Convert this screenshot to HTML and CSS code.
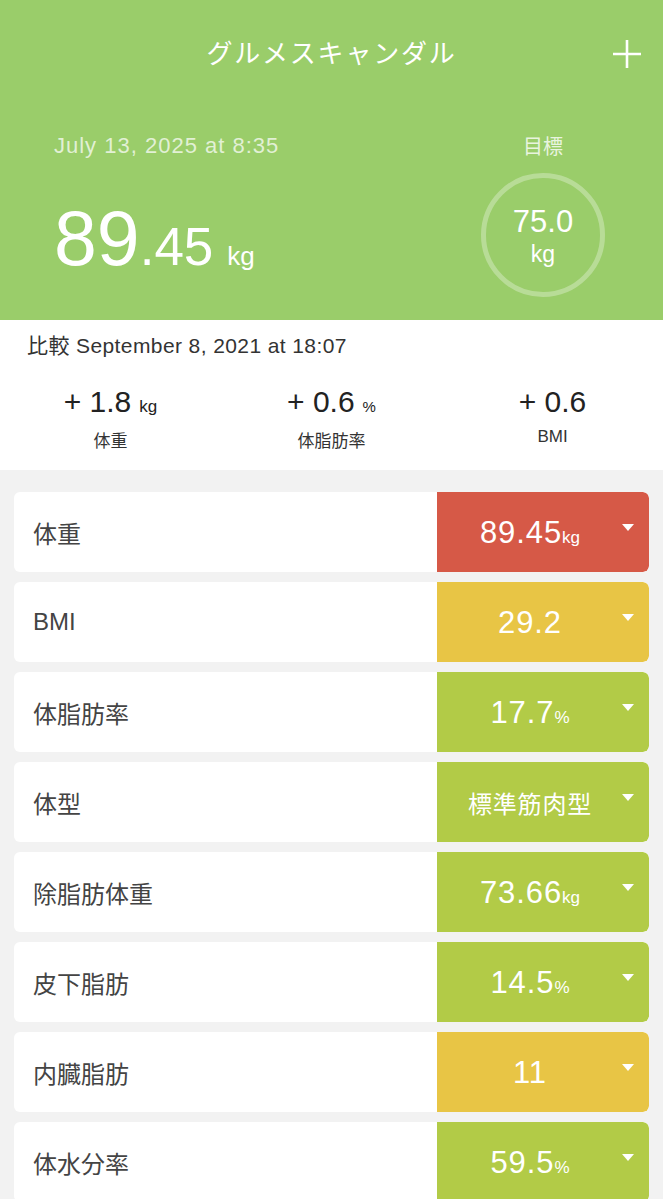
FILE: index.html
```html
<!DOCTYPE html>
<html lang="ja">
<head>
<meta charset="utf-8">
<link rel="stylesheet" href="styles.css">
</head>
<body>
<header class="hero">
  <div class="topbar">
    <span></span>
    <h1 class="title">グルメスキャンダル</h1>
    <svg class="plus" width="30" height="30" viewBox="0 0 30 30"><path d="M15 1V29M1 15H29" stroke="#fff" stroke-width="2.6" fill="none"/></svg>
  </div>
  <div class="summary">
    <div class="current">
      <div class="date">July 13, 2025 at 8:35</div>
      <div class="weight"><span class="w-int">89</span><span class="w-dec">.45</span><span class="w-unit">kg</span></div>
    </div>
    <div class="goal">
      <div class="goal-label">目標</div>
      <div class="ring">
        <span class="ring-val">75.0</span>
        <span class="ring-unit">kg</span>
      </div>
    </div>
  </div>
</header>

<section class="compare">
  <div class="compare-date">比較 September 8, 2021 at 18:07</div>
  <div class="stats">
    <div class="stat"><div class="stat-val">+ 1.8<span class="stat-unit">kg</span></div><div class="stat-label">体重</div></div>
    <div class="stat"><div class="stat-val">+ 0.6<span class="stat-unit pct">%</span></div><div class="stat-label">体脂肪率</div></div>
    <div class="stat"><div class="stat-val">+ 0.6</div><div class="stat-label">BMI</div></div>
  </div>
</section>

<main class="list">
  <div class="card"><div class="label">体重</div><div class="value red"><span class="v">89.45<small>kg</small></span><i class="arrow"></i></div></div>
  <div class="card"><div class="label">BMI</div><div class="value yellow"><span class="v">29.2</span><i class="arrow"></i></div></div>
  <div class="card"><div class="label">体脂肪率</div><div class="value green"><span class="v">17.7<small>%</small></span><i class="arrow"></i></div></div>
  <div class="card"><div class="label">体型</div><div class="value green"><span class="v jp">標準筋肉型</span><i class="arrow"></i></div></div>
  <div class="card"><div class="label">除脂肪体重</div><div class="value green"><span class="v">73.66<small>kg</small></span><i class="arrow"></i></div></div>
  <div class="card"><div class="label">皮下脂肪</div><div class="value green"><span class="v">14.5<small>%</small></span><i class="arrow"></i></div></div>
  <div class="card"><div class="label">内臓脂肪</div><div class="value yellow"><span class="v">11</span><i class="arrow"></i></div></div>
  <div class="card"><div class="label">体水分率</div><div class="value green"><span class="v">59.5<small>%</small></span><i class="arrow"></i></div></div>
</main>
</body>
</html>
```

FILE: styles.css
```css
* { box-sizing: border-box; margin: 0; padding: 0; }
html, body { background: #f2f2f2; }
body {
  font-family: "Liberation Sans", "Noto Sans CJK JP", sans-serif;
  width: 663px;
  overflow: hidden;
}
.hero {
  background: #9acd6a;
  height: 320px;
  color: #fff;
}
.topbar {
  height: 108px;
  padding-bottom: 6px;
  display: grid;
  grid-template-columns: 1fr auto 1fr;
  align-items: center;
}
.title {
  font-family: "Noto Sans CJK JP", sans-serif;
  font-weight: 400;
  font-size: 26px;
  letter-spacing: 1.8px;
  color: #fff;
}
.plus {
  justify-self: end;
  margin-right: 21px;
  margin-top: 6px;
}
.summary {
  display: flex;
  justify-content: space-between;
  padding: 0 58px 0 54px;
}
.date {
  margin-top: 25px;
  font-size: 22px;
  line-height: 26px;
  letter-spacing: 1px;
  color: rgba(255,255,255,0.72);
}
.weight {
  margin-top: 41px;
  display: flex;
  align-items: baseline;
  line-height: 77px;
}
.w-int { font-size: 77px; }
.w-dec { font-size: 53px; }
.w-unit { font-size: 26px; margin-left: 14px; }
.goal {
  display: flex;
  flex-direction: column;
  align-items: center;
}
.goal-label {
  margin-top: 25px;
  font-family: "Noto Sans CJK JP", sans-serif;
  font-size: 20px;
  line-height: 26px;
  color: rgba(255,255,255,0.8);
}
.ring {
  margin-top: 14px;
  width: 124px;
  height: 124px;
  border: 5px solid rgba(255,255,255,0.3);
  border-radius: 50%;
  display: flex;
  flex-direction: column;
  align-items: center;
  padding-top: 27px;
}
.ring-val { font-size: 31px; line-height: 34px; }
.ring-unit { font-size: 23px; line-height: 26px; margin-top: 2px; }

.compare {
  background: #fff;
  height: 150px;
  color: #333;
}
.compare-date {
  padding: 13px 0 0 27px;
  font-size: 21px;
  line-height: 26px;
  letter-spacing: 0.4px;
}
.stats {
  display: grid;
  grid-template-columns: repeat(3, 1fr);
  margin-top: 25px;
}
.stat {
  display: flex;
  flex-direction: column;
  align-items: center;
}
.stat-val {
  font-size: 30px;
  line-height: 36px;
  color: #222;
}
.stat-unit { font-size: 17px; margin-left: 8px; }
.stat-unit.pct { font-size: 15px; }
.stat-label {
  margin-top: 6px;
  font-size: 17px;
  line-height: 22px;
  color: #333;
}

.list {
  padding: 22px 14px 0;
  display: flex;
  flex-direction: column;
  gap: 10px;
}
.card {
  height: 80px;
  background: #fff;
  border-radius: 6px;
  display: flex;
  align-items: center;
  overflow: hidden;
}
.label {
  flex: 1;
  padding-left: 19px;
  font-size: 24px;
  color: #444;
}
.value {
  position: relative;
  width: 212px;
  height: 100%;
  display: flex;
  align-items: center;
  color: #fff;
  border-radius: 0 6px 6px 0;
}
.red { background: #d65947; }
.yellow { background: #e8c545; }
.green { background: #b2cb47; }
.v {
  width: 186px;
  text-align: center;
  font-size: 31px;
  letter-spacing: 0.9px;
  margin-top: 2px;
}
.v small { font-size: 17px; letter-spacing: 0; }
.v.jp { font-size: 24px; letter-spacing: 0.8px; margin-top: 0; }
.arrow {
  position: absolute;
  right: 15px;
  top: 32px;
  width: 0;
  height: 0;
  border-left: 6.5px solid transparent;
  border-right: 6.5px solid transparent;
  border-top: 7px solid #fff;
}
```
